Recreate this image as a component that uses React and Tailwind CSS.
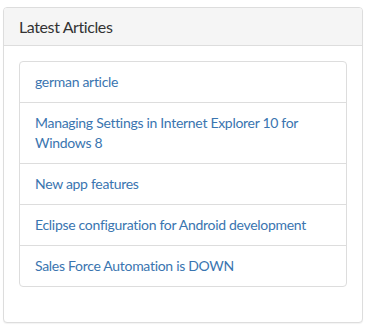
export default function App() {
  const items = [
    "german article",
    "Managing Settings in Internet Explorer 10 for Windows 8",
    "New app features",
    "Eclipse configuration for Android development",
    "Sales Force Automation is DOWN",
  ];
  return (
    <div className="w-[368px] h-[331px] bg-white pt-[7px] pl-[3px]" style={{ fontFamily: "Lato, 'Open Sans', sans-serif" }}>
      <div className="w-[360px] border border-[#dddddd] rounded-[4px] bg-white shadow-[0_1px_1px_rgba(0,0,0,0.05)]">
        <div className="h-[38px] px-[15px] flex items-center bg-[#f5f5f5] border-b border-[#dddddd] rounded-t-[3px]">
          <h3 className="text-[16px] text-[#333333] leading-[1.1] tracking-[-0.4px]">Latest Articles</h3>
        </div>
        <div className="p-[15px] pb-[35px]">
          <div className="border border-[#dddddd] rounded-[4px]">
            {items.map((t, i) => (
              <div
                key={i}
                className={"px-[15px] py-[10px] text-[14px] leading-[20px] tracking-[-0.3px] text-[#3a75b0] " + (i > 0 ? "border-t border-[#dddddd]" : "")}
              >
                <a href="#" className="text-[#3a75b0]">{t}</a>
              </div>
            ))}
          </div>
        </div>
      </div>
    </div>
  );
}
